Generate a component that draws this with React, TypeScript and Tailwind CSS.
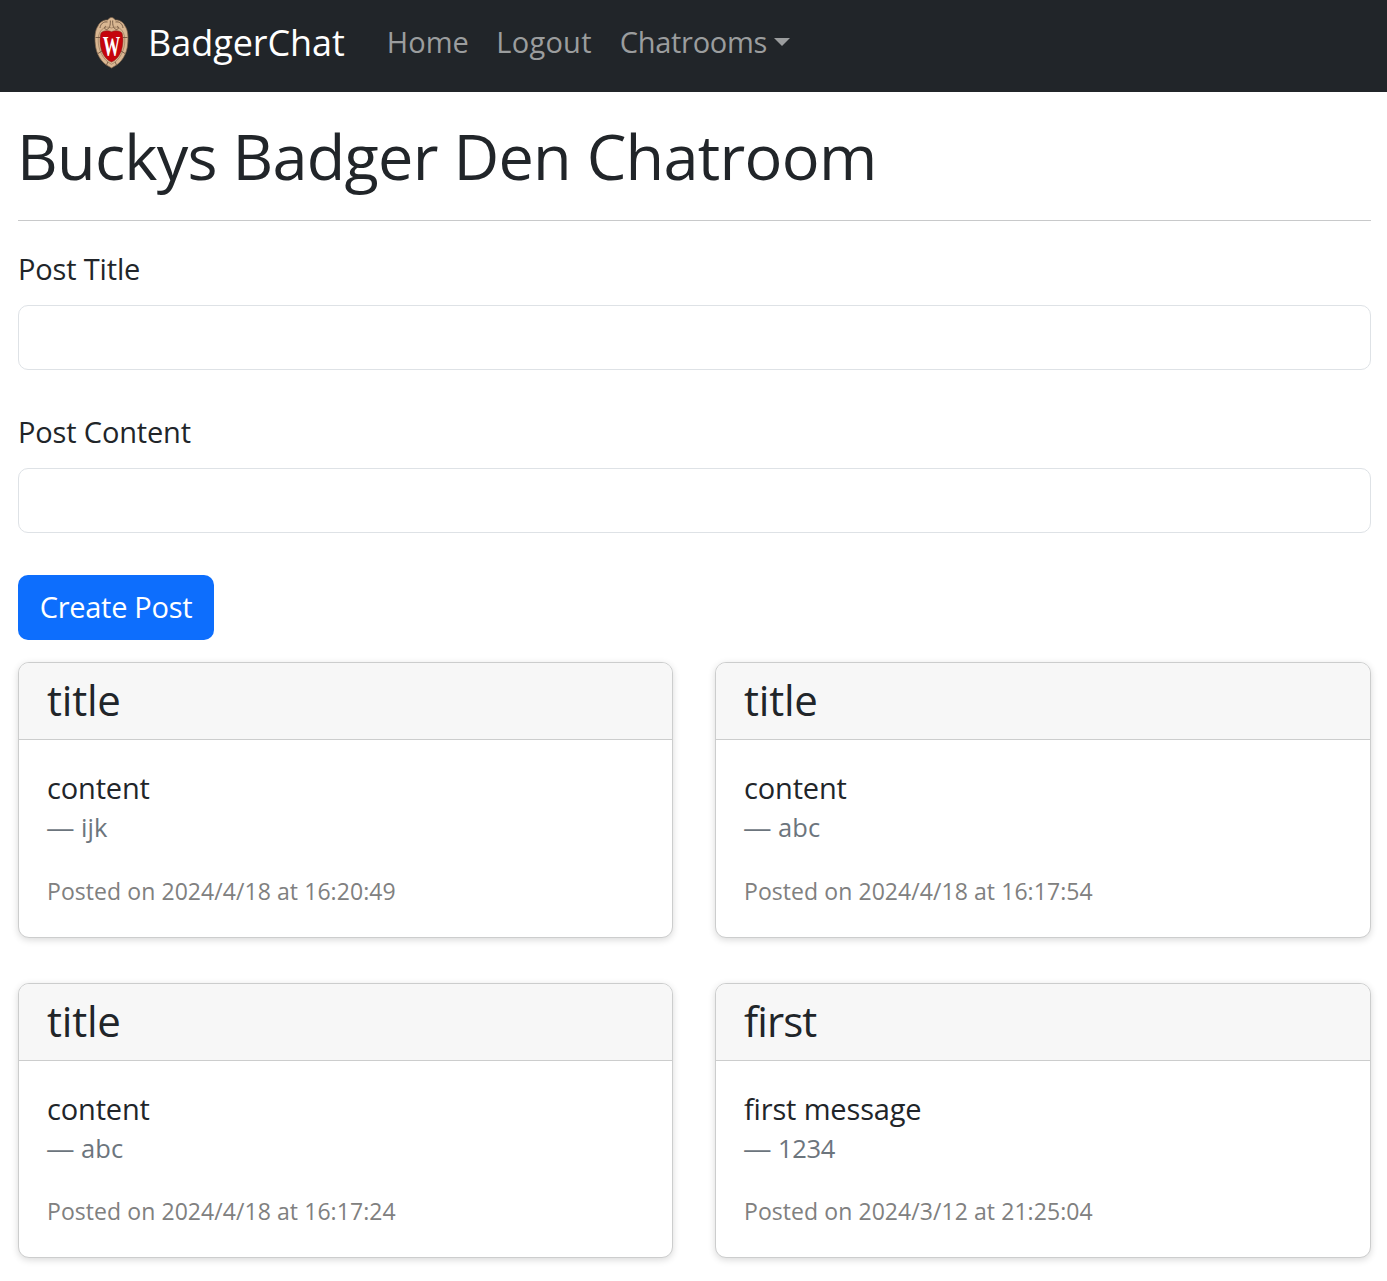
type Post = {
  title: string;
  titleTracking: string;
  content: string;
  author: string;
  authorTracking: string;
  posted: string;
  bodyHeight: string;
};

const posts: Post[] = [
  { title: "title", titleTracking: "tracking-[-0.2px]", content: "content", author: "ijk", authorTracking: "tracking-[0.1px]", posted: "Posted on 2024/4/18 at 16:20:49", bodyHeight: "h-[197px]" },
  { title: "title", titleTracking: "tracking-[-0.2px]", content: "content", author: "abc", authorTracking: "tracking-[0.1px]", posted: "Posted on 2024/4/18 at 16:17:54", bodyHeight: "h-[197px]" },
  { title: "title", titleTracking: "tracking-[-0.2px]", content: "content", author: "abc", authorTracking: "tracking-[0.1px]", posted: "Posted on 2024/4/18 at 16:17:24", bodyHeight: "h-[196px]" },
  { title: "first", titleTracking: "tracking-[-0.9px]", content: "first message", author: "1234", authorTracking: "tracking-[-0.3px]", posted: "Posted on 2024/3/12 at 21:25:04", bodyHeight: "h-[196px]" },
];

function Crest() {
  return (
    <svg width="35" height="52" viewBox="0 0 35 52" className="shrink-0">
      <path
        d="M17.5 0.5 C19.5 0.5 20.3 2 21.5 3 C25 2.6 29.5 5 31 9 C34 13 34.4 20 33.7 27 C33 37 27.5 46 20 49.5 L17.5 51 L15 49.5 C7.5 46 2 37 1.3 27 C0.6 20 1 13 4 9 C5.5 5 10 2.6 13.5 3 C14.7 2 15.5 0.5 17.5 0.5Z"
        fill="#d9b792"
        stroke="#7d634b"
        strokeWidth="0.7"
      />
      <path
        d="M17.5 11 C10 7.5 4.6 14 4.2 22 C3.8 33 9.5 43.5 17.5 47.3 C25.5 43.5 31.2 33 30.8 22 C30.4 14 25 7.5 17.5 11Z"
        fill="none"
        stroke="#9a7a5b"
        strokeWidth="0.7"
      />
      <g fill="none" stroke="#6f553f" strokeWidth="0.9">
        <path d="M16.3 3.5 C16.6 8 15.5 12 12.5 12.5 C10.2 12.6 10 9.4 12 9.2 M18.7 3.5 C18.4 8 19.5 12 22.5 12.5 C24.8 12.6 25 9.4 23 9.2" />
        <path d="M13.5 5 C9.5 4.2 6.4 7 6 11 M21.5 5 C25.5 4.2 28.6 7 29 11" />
        <path d="M1.5 20.5 H6 M29 20.5 H33.5 M4 36.5 L8 34 M31 36.5 L27 34 M12.5 48 L14 44.8 M22.5 48 L21 44.8" />
      </g>
      <path
        d="M17.5 14.8 C21 13 26 13.6 28 16 C29.4 20.5 29.3 27.5 27.4 33.5 C25.2 39.5 21.5 43.6 17.5 45 C13.5 43.6 9.8 39.5 7.6 33.5 C5.7 27.5 5.6 20.5 7 16 C9 13.6 14 13 17.5 14.8Z"
        fill="#c5050c"
        stroke="#7d2a20"
        strokeWidth="0.5"
      />
      <text
        transform="translate(17.5 39) scale(0.6 1)"
        textAnchor="middle"
        fill="#fff"
        className="font-['Liberation_Serif',serif] text-[29px] font-bold tracking-normal"
      >
        W
      </text>
    </svg>
  );
}

function Navbar() {
  return (
    <nav className="flex h-[92px] items-start bg-[#212529] pl-[94px] pt-[17px] text-[29px] leading-[50px] text-[#9b9d9e]">
      <a href="#" className="flex text-[36px] tracking-[-0.05px] text-white">
        <Crest />
        <span className="ml-[19px] pt-px">BadgerChat</span>
      </a>
      <a href="#" className="ml-[42px] tracking-[0px]">Home</a>
      <a href="#" className="ml-[27.5px] tracking-[0.25px]">Logout</a>
      <a href="#" className="ml-[28px] flex tracking-[-0.28px]">
        Chatrooms
        <span className="ml-[6.5px] mt-[21px] h-0 w-0 border-x-[8px] border-t-[8px] border-x-transparent border-t-[#9b9d9e]" />
      </a>
    </nav>
  );
}

function Field({ id, label }: { id: string; label: string }) {
  return (
    <div className="flex flex-col">
      <label htmlFor={id} className="mb-[15px] text-[29px] leading-[43px] tracking-[-0.16px]">{label}</label>
      <input id={id} className="h-[65px] rounded-[10px] border border-[#dee2e6] bg-white px-5 text-[29px] outline-none" />
    </div>
  );
}

function PostCard({ post }: { post: Post }) {
  return (
    <article className="overflow-hidden rounded-[11px] border border-[#cccdcd] bg-white shadow-[0_2px_7px_rgba(0,0,0,0.15)]">
      <h2 className={"h-[77px] border-b border-[#cccdcd] bg-[#f7f7f7] pl-7 text-[42px] leading-[74px] " + post.titleTracking}>
        {post.title}
      </h2>
      <div className={"flex flex-col pl-7 pt-[26px] " + post.bodyHeight}>
        <p className="text-[29px] leading-[43px] tracking-[-0.16px]">{post.content}</p>
        <p className={"flex text-[25.5px] leading-[37px] text-[#6c757d] " + post.authorTracking}>
          <span className="-ml-px inline-block w-[26px] origin-left scale-x-[1.12]">—</span>
          <span className="ml-[9px]">{post.author}</span>
        </p>
        <p className="mb-[29px] mt-auto text-[23px] leading-[34px] tracking-[0.07px] text-[#808080]">{post.posted}</p>
      </div>
    </article>
  );
}

export default function App() {
  return (
    <div className="min-h-[1281px] bg-white font-['Open_Sans',sans-serif] text-[#212529]">
      <Navbar />
      <main className="pl-[18px] pr-4 pt-5">
        <h1 className="-ml-px text-[63px] leading-[88px] tracking-[-0.72px]">Buckys Badger Den Chatroom</h1>
        <hr className="mb-[26px] mt-5 border-[#c8c9ca]" />
        <form className="flex flex-col items-stretch gap-10">
          <Field id="post-title" label="Post Title" />
          <Field id="post-content" label="Post Content" />
          <button type="button" className="mt-0.5 h-[65px] w-[196px] self-start rounded-[10px] bg-[#0d6efd] pb-0.5 text-[29px] tracking-[-0.3px] text-white">
            Create Post
          </button>
        </form>
        <section className="mt-[22px] grid grid-cols-[655px_656px] gap-x-[42px] gap-y-[45px]">
          {posts.map((post) => (
            <PostCard key={post.posted} post={post} />
          ))}
        </section>
      </main>
    </div>
  );
}
